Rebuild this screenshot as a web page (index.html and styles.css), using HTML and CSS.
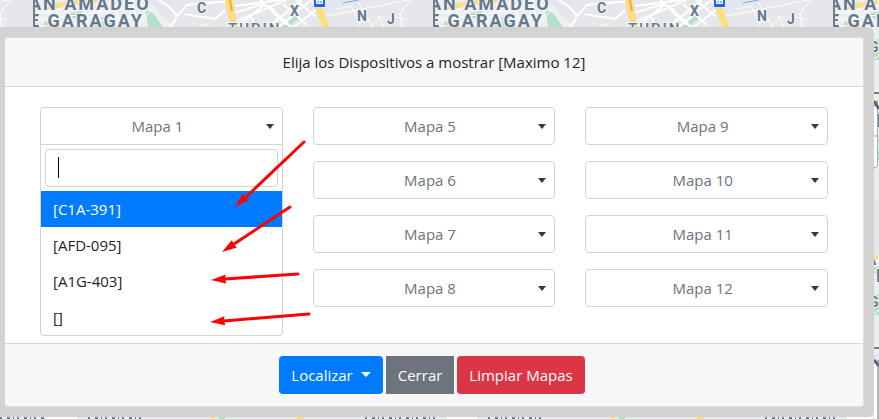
FILE: index.html
```html
<!DOCTYPE html>
<html lang="es">
<head>
<meta charset="utf-8">
<title>Dispositivos</title>
<link rel="stylesheet" href="styles.css">
</head>
<body>
<svg class="map" aria-hidden="true">
  <defs>
    <svg id="tile" width="400" height="256" overflow="hidden">
      <rect width="400" height="256" fill="#e5e7eb"/>
      <path d="M0 0H115L140 27L165 100H0Z" fill="#eceef0"/>
      <path d="M113 10L119 12L130 27H115ZM11 22H19L17 27H11ZM37 13L50 11L47 18H40ZM63 20L76 15L80 27H61ZM40 40L55 38L50 60H35ZM248 27L264 15L268 17L255 27ZM216 23L223 20L225 23L214 27ZM0 115H30V125H0Z" fill="#b5dfc3"/>
      <g fill="none" stroke="#fff" stroke-width="2">
        <path d="M4 14L60 3M5 20L100 8M12 2L20 27M30 0L35 27M47 0L53 27M63 0L69 27M80 0L88 27M98 0L106 27M0 27L110 16M0 50L70 10M0 70L70 30M0 86L60 46M110 0L118 11L103 27" stroke-width="1"/>
        <path d="M125 0C133 4 141 10 144 16L141 22L136 27M144 16L154 5L195 1M151 14L182 19L192 10"/>
        <path d="M198 14L230 4L242 10M202 6L248 0M205 26L232 4M204 21L253 0M227 0L254 25M235 27L269 0M246 27L278 0M261 27L289 5M217 15L224 27M240 10L258 27M250 4L274 25M263 0L283 17M277 0L287 9" stroke-width="2"/>
        <path d="M292 16L340 7L375 0M303 9L318 6L328 27M324 0L340 27M338 27L347 17L360 23M345 16L351 27M360 16L374 20M378 0L367 13L369 27" stroke-width="1"/>
      </g>
      <path d="M15 7L51 1L64 0M0 131H30" fill="none" stroke="#fddd83" stroke-width="5"/>
      <path d="M195 -2L202 30M283 0L294 30" fill="none" stroke="#fddd83" stroke-width="7"/>
      <path d="M197 0L199 11" fill="none" stroke="#f5ae27" stroke-width="2"/>
      <path d="M310 3L326 0" fill="none" stroke="#76aaf0" stroke-width="1"/>
      <rect x="281" y="-4" width="11" height="11" rx="1" fill="#1769e8"/>
      <rect x="283" y="-2" width="7" height="6" rx="1" fill="#fff"/>
      <path d="M284 2H286M287 2H289M284 5L283 6M289 5L290 6" stroke="#1769e8"/>
      <circle cx="172" cy="28" r="4" fill="#e5e7eb" stroke="#fff"/>
      <g class="place">
        <text x="-4" y="10">AN AMADEO</text>
        <text x="-4" y="27">E GARAGAY</text>
      </g>
      <g class="district">
        <text x="164" y="13">C</text><text x="257" y="16">X</text>
        <text x="324" y="21">N</text><text x="354" y="24">J</text>
      </g>
      <text class="street" x="195" y="34">TURIN</text>
      <text class="district" x="36" y="52">G</text>
      <path d="M0 0V256M0 255H400" stroke="#777b80" stroke-width="4" fill="none"/>
    </svg>
  </defs>
  <use href="#tile" x="-367" y="0"/><use href="#tile" x="33" y="0"/><use href="#tile" x="433" y="0"/><use href="#tile" x="833" y="0"/>
  <use href="#tile" x="833" y="100"/><use href="#tile" x="833" y="255"/>
  <g>
    <rect x="874" y="106" width="4" height="61" fill="#fff"/>
    <path d="M874 136H877M877.500 100V165Q877 168 874 168" fill="none" stroke="#aaacb2"/>
    <rect x="874" y="363" width="3" height="56" fill="#fff"/>
    <path d="M878 360V419" stroke="#b2b3b8" stroke-width="2"/>
    <path d="M874 93H879M874 348H879" stroke="#777b80" stroke-width="2"/>
    <path d="M874 101L879 109M874 360L879 366" stroke="#536579" stroke-width="3"/>
  </g>
  <rect y="416" width="873" height="3" fill="#e9eaed"/>
  <path d="M0 418H45M88 418H145M365 418H435M488 418H545M765 418H835" stroke="#718195" stroke-width="2" stroke-dasharray="2 5 3 3 1 3"/>
  <path d="M211 418H215M297 418H304M611 418H615M697 418H704" stroke="#fddd83" stroke-width="2"/>
  <path d="M219 418H225M619 418H625" stroke="#b5dfc3" stroke-width="2"/>
  <path d="M47 418H77M447 418H477M847 418H873" stroke="#fff" stroke-width="2"/>
</svg>
<main class="frame">
  <form class="card">
    <header class="card-header">Elija los Dispositivos a mostrar [Maximo 12]</header>
    <div class="card-body">
      <div class="column">
        <div class="picker">
          <select class="field field-open" aria-label="Mapa 1"><option>Mapa 1</option></select>
          <div class="menu">
            <div class="search"><input type="text" aria-label="Buscar dispositivo"></div>
            <ul class="options" role="listbox" aria-label="Dispositivos">
              <li class="option active" role="option" aria-selected="true">[C1A-391]</li>
              <li class="option" role="option">[AFD-095]</li>
              <li class="option" role="option">[A1G-403]</li>
              <li class="option" role="option">[]</li>
            </ul>
          </div>
        </div>
      </div>
      <div class="column">
        <select class="field" aria-label="Mapa 5"><option>Mapa 5</option></select>
        <select class="field" aria-label="Mapa 6"><option>Mapa 6</option></select>
        <select class="field" aria-label="Mapa 7"><option>Mapa 7</option></select>
        <select class="field" aria-label="Mapa 8"><option>Mapa 8</option></select>
      </div>
      <div class="column">
        <select class="field" aria-label="Mapa 9"><option>Mapa 9</option></select>
        <select class="field" aria-label="Mapa 10"><option>Mapa 10</option></select>
        <select class="field" aria-label="Mapa 11"><option>Mapa 11</option></select>
        <select class="field" aria-label="Mapa 12"><option>Mapa 12</option></select>
      </div>
    </div>
    <footer class="card-footer">
      <button type="button" class="btn primary">Localizar<span class="caret"></span></button>
      <button type="button" class="btn secondary">Cerrar</button>
      <button type="button" class="btn danger">Limpiar Mapas</button>
    </footer>
  </form>
</main>
<svg class="arrows" aria-hidden="true">
  <defs>
    <marker id="head" markerUnits="userSpaceOnUse" markerWidth="16" markerHeight="10" refX="15" refY="5" orient="auto"><path d="M0 0.500L15 5L0 9.500L1 5Z" fill="#f00"/></marker>
  </defs>
  <g stroke="#f00" stroke-width="3" stroke-linecap="round" fill="none">
    <path d="M304 142L246 197"/><path d="M290 207L234 244"/><path d="M298 274L225 279"/><path d="M309 314L224 321"/>
  </g>
  <g fill="none">
    <path d="M304 142L235 207" marker-end="url(#head)"/><path d="M290 207L222 252" marker-end="url(#head)"/><path d="M298 274L211 280" marker-end="url(#head)"/><path d="M309 314L210 322" marker-end="url(#head)"/>
  </g>
</svg>
</body>
</html>
```
FILE: styles.css
```css
* { box-sizing: border-box; }
body {
  margin: 0;
  min-height: 100vh;
  position: relative;
  overflow: hidden;
  background: #e5e7eb;
  color: #212529;
  font: 15px/24px "Open Sans", "Noto Sans", sans-serif;
}
.map, .arrows {
  position: absolute;
  top: 0;
  left: 0;
  width: 100%;
  height: 100%;
}
.arrows { pointer-events: none; }
.place, .district, .street { font-family: Roboto, sans-serif; font-weight: 700; fill: #64788e; stroke: #f4f5f6; stroke-width: 2px; paint-order: stroke; }
.place { font-size: 18px; letter-spacing: 2px; }
.district { font-size: 14px; }
.street { font-size: 15px; letter-spacing: 2px; font-weight: 500; }
.frame {
  position: relative;
  margin: 27px 5px 0 0;
  padding: 10px 10px 10px 5px;
  background: #d3d3d3;
  border-radius: 0 6px 6px 0;
}
.card {
  border: 1px solid #dfdfdf;
  border-left: 0;
  border-radius: 4px;
  background: #fff;
}
.card-header, .card-footer { background: #f7f7f7; text-align: center; }
.card-header {
  padding: 12px 20px;
  border-bottom: 1px solid #d9d9d9;
  border-radius: 4px 4px 0 0;
}
.card-body {
  display: grid;
  grid-template-columns: repeat(3, 1fr);
  gap: 30px;
  padding: 20px 35px 36px;
}
.column { display: flex; flex-direction: column; gap: 16px; }
.picker { position: relative; }
.field {
  appearance: none;
  display: block;
  width: 100%;
  height: 38px;
  padding: 0 20px 0 12px;
  border: 1px solid #ced4da;
  border-radius: 4px;
  color: #6c757d;
  font: inherit;
  text-align: center;
  text-align-last: center;
  background: #fff url("data:image/svg+xml,%3Csvg xmlns='http://www.w3.org/2000/svg' width='8' height='5'%3E%3Cpath d='M0 0H8L4 5Z' fill='%23343a40'/%3E%3C/svg%3E") no-repeat right 8px center;
}
.field-open { border-radius: 4px 4px 0 0; }
.menu {
  position: absolute;
  top: 100%;
  left: 0;
  right: 0;
  border: 1px solid #ced4da;
  border-top: 0;
  border-radius: 0 0 4px 4px;
  background: #fff;
}
.search { position: relative; padding: 4px; }
.search::after {
  content: "";
  position: absolute;
  left: 17px;
  top: 12px;
  width: 1px;
  height: 21px;
  background: #000;
}
.search input {
  display: block;
  width: 100%;
  height: 38px;
  padding: 0 12px;
  border: 1px solid #ced4da;
  border-radius: 4px;
  font: inherit;
  outline: 0;
}
.options { margin: 0; padding: 0; list-style: none; }
.option { padding: 6px 12px; }
.active { background: #007bff; color: #fff; font-weight: 500; }
.card-footer {
  display: flex;
  justify-content: center;
  gap: 3px;
  padding: 12px 24px 12px 20px;
  border-top: 1px solid #d9d9d9;
  border-radius: 0 0 4px 4px;
}
.btn {
  height: 38px;
  padding: 0 12px;
  border: 0;
  color: #fff;
  font: inherit;
  font-weight: 500;
}
.primary { background: #007bff; border-radius: 4px; }
.secondary { background: #6c757d; }
.danger { background: #dc3545; border-radius: 4px; }
.caret {
  display: inline-block;
  margin-left: 8px;
  vertical-align: 4px;
  border: 5px solid transparent;
  border-top-color: #fff;
  border-bottom: 0;
}
```
